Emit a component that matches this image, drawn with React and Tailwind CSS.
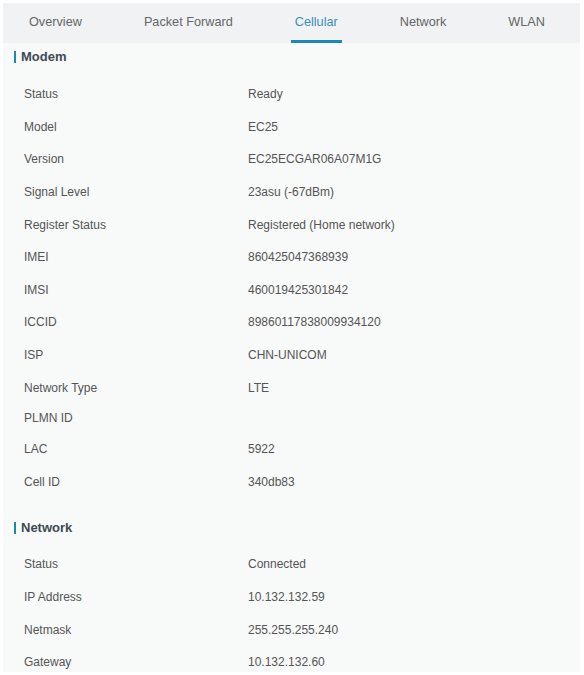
const tabs = ['Overview', 'Packet Forward', 'Cellular', 'Network', 'WLAN'];

const modem = [
  ['Status', 'Ready'],
  ['Model', 'EC25'],
  ['Version', 'EC25ECGAR06A07M1G'],
  ['Signal Level', '23asu (-67dBm)'],
  ['Register Status', 'Registered (Home network)'],
  ['IMEI', '860425047368939'],
  ['IMSI', '460019425301842'],
  ['ICCID', '89860117838009934120'],
  ['ISP', 'CHN-UNICOM'],
  ['Network Type', 'LTE'],
  ['PLMN ID', ''],
  ['LAC', '5922'],
  ['Cell ID', '340db83'],
];

const network = [
  ['Status', 'Connected'],
  ['IP Address', '10.132.132.59'],
  ['Netmask', '255.255.255.240'],
  ['Gateway', '10.132.132.60'],
];

function Row({ label, value }) {
  return (
    <div className={`flex items-center ${value ? 'h-[32.6px]' : 'h-[29px]'}`}>
      <span className="w-[245px] shrink-0 pl-[21px]">{label}</span>
      <span>{value}</span>
    </div>
  );
}

function Section({ title, rows, top }) {
  return (
    <div>
      <div className={top}>
        <div className="flex h-4 items-center">
          <span className="ml-[11px] h-[12px] w-[2px] bg-[#1a8ab4]" />
          <span className="ml-[5px] text-[13px] font-bold leading-4 text-[#3d4b55]">{title}</span>
        </div>
      </div>
      {rows.map(([l, v]) => (
        <Row key={l} label={l} value={v} />
      ))}
    </div>
  );
}

export default function App() {
  return (
    <div className="h-[675px] w-[584px] overflow-hidden bg-white p-[3px] pb-0">
      <div className="h-[669px] w-[577px] overflow-hidden bg-[#f8f9f9] text-[12px] text-[#555] [font-family:'Liberation_Sans',Arial,sans-serif]">
        <div className="flex h-[40px] bg-[#f0f2f3] text-[12.7px]">
          {tabs.map((t, i) => (
            <div
              key={t}
              className={`relative flex shrink-0 items-center whitespace-nowrap ${i === 0 ? 'pl-[26px]' : 'pl-[31px]'} pr-[31px] ${
                t === 'Cellular' ? 'text-[#3b8fbb]' : 'text-[#666]'
              }`}
            >
              {t}
              {t === 'Cellular' && (
                <span className="absolute bottom-0 left-[27px] h-[3px] w-[51px] bg-[#1a8ab4]" />
              )}
            </div>
          ))}
        </div>
        <Section title="Modem" rows={modem} top="h-[35px] pt-[6px]" />
        <Section title="Network" rows={network} top="h-[50px] pt-[22px]" />
      </div>
    </div>
  );
}
